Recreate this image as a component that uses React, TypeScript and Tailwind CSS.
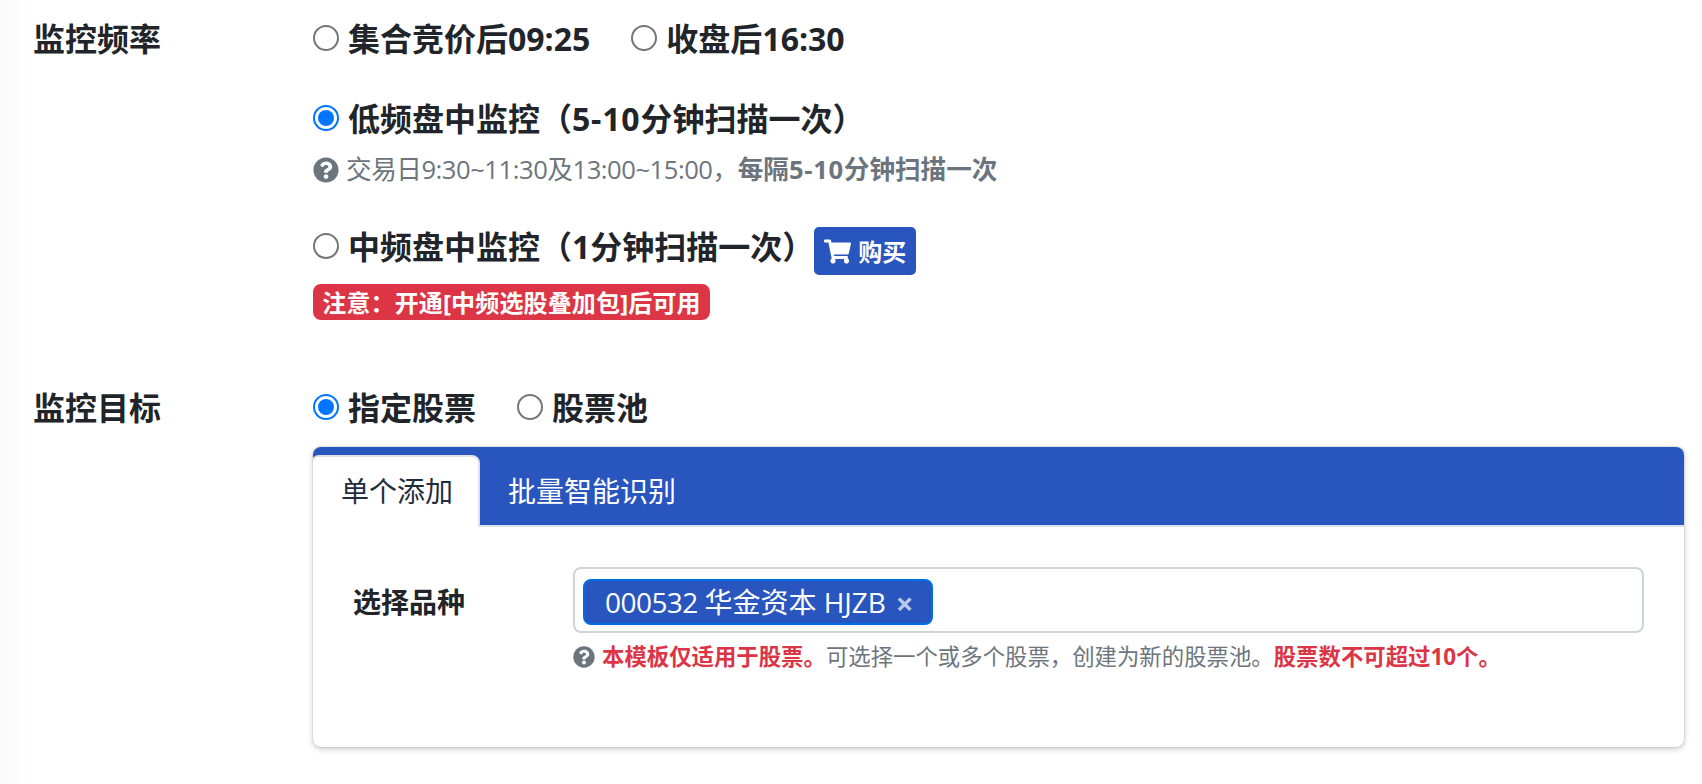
import { useState } from "react"
import type { ReactNode } from "react"
import clsx from "clsx"
import { FaQuestionCircle, FaShoppingCart } from "react-icons/fa"

interface RadioProps {
  label: ReactNode
  checked: boolean
  onSelect: () => void
}

function Radio({ label, checked, onSelect }: RadioProps) {
  return (
    <button
      type="button"
      role="radio"
      aria-checked={checked}
      onClick={onSelect}
      className="flex h-12 items-center whitespace-nowrap font-bold"
    >
      <span
        className={clsx(
          "mr-[9px] flex size-[26px] shrink-0 items-center justify-center rounded-full border-2 bg-white",
          checked ? "border-[#0075ff]" : "border-[#767676]"
        )}
      >
        {checked && <span className="size-4 rounded-full bg-[#0075ff]" />}
      </span>
      <span className="relative top-px">{label}</span>
    </button>
  )
}

function FieldRow({ label, children }: { label: string; children: ReactNode }) {
  return (
    <div className="flex">
      <div className="relative top-px w-[280px] shrink-0 font-bold leading-[48px]">{label}</div>
      <div className="min-w-0 flex-1">{children}</div>
    </div>
  )
}

const TABS = ["单个添加", "批量智能识别"]

export default function App() {
  const [frequency, setFrequency] = useState("low")
  const [target, setTarget] = useState("stock")
  const [tab, setTab] = useState(0)

  return (
    <div className="h-[784px] w-[1702px] overflow-hidden bg-linear-to-r from-[#f9f9f9] via-[#fdfdfd] via-[14px] to-white to-[32px] pl-[33px] pr-[18px] pt-[14px] font-['Open_Sans','Noto_Sans_CJK_SC',sans-serif] text-[32px] leading-[48px] text-[#212529]">
      <FieldRow label="监控频率">
        <div className="flex gap-[41px]">
          <Radio label="集合竞价后09:25" checked={frequency === "open"} onSelect={() => setFrequency("open")} />
          <Radio label="收盘后16:30" checked={frequency === "close"} onSelect={() => setFrequency("close")} />
        </div>

        <div className="mt-8">
          <Radio
            label={<>低频盘中监控（<span className="tracking-[0.8px]">5-10</span>分钟扫描一次）</>}
            checked={frequency === "low"}
            onSelect={() => setFrequency("low")}
          />
          <div className="mt-2 flex h-10 items-center whitespace-nowrap text-[25.6px] text-[#6c757d]">
            <FaQuestionCircle className="mb-px mr-[7px] size-[26px] shrink-0" />
            <span className="tracking-[-0.46px]">交易日9:30~11:30及13:00~15:00，</span>
            <b>每隔<span className="tracking-[0.7px]">5-10</span>分钟扫描一次</b>
          </div>
        </div>

        <div className="mt-8">
          <div className="flex items-start">
            <Radio label="中频盘中监控（1分钟扫描一次）" checked={frequency === "mid"} onSelect={() => setFrequency("mid")} />
            <button className="mt-[5px] flex h-12 w-[102px] items-center justify-center gap-[7px] rounded-[5px] bg-[#2855be] text-[24px] font-bold text-white">
              <FaShoppingCart className="size-[27px]" />
              <span className="relative top-px">购买</span>
            </button>
          </div>
          <span className="mt-[9px] flex h-9 w-[397px] items-center justify-center whitespace-nowrap rounded-lg bg-[#dc3545] pt-0.5 text-[24px] font-bold tracking-[0.15px] text-white">
            注意：开通[中频选股叠加包]后可用
          </span>
        </div>
      </FieldRow>

      <div className="mt-[63px]">
        <FieldRow label="监控目标">
          <div className="flex gap-[41px]">
            <Radio label="指定股票" checked={target === "stock"} onSelect={() => setTarget("stock")} />
            <Radio label="股票池" checked={target === "pool"} onSelect={() => setTarget("pool")} />
          </div>

          <div className="mt-4 h-[300px] overflow-hidden rounded-lg bg-white text-[28px] shadow-[0_0_2px_rgba(0,0,0,0.25),0_2px_6px_rgba(0,0,0,0.2)]">
            <div className="flex h-20 border-b-2 border-[#dee2e6] bg-[#2855be] pt-2">
              {TABS.map((name, i) => (
                <button
                  key={name}
                  onClick={() => setTab(i)}
                  className={clsx(
                    "h-[72px] rounded-t-lg border-2 border-b-0 pb-0.5 leading-[66px] first:-ml-0.5 first:pl-7 pl-[26px] pr-[25px]",
                    tab === i ? "border-[#dee2e6] bg-white text-[#1f2d3d]" : "border-transparent text-white"
                  )}
                >
                  {name}
                </button>
              ))}
            </div>

            <div className="flex pl-10 pr-10 pt-10">
              <div className="w-[220px] shrink-0 font-bold leading-[71px]">选择品种</div>
              <div className="flex-1">
                <div className="flex h-[66px] items-center rounded-lg border-2 border-[#ced4da] px-2 pt-1">
                  <div className="flex h-[46px] w-[350px] items-center whitespace-nowrap rounded-lg border-2 border-[#006fe6] bg-[#2855be] pl-5 text-white">
                    <span>
                      <span className="tracking-[-0.55px]">000532 </span>华金资本 <span className="tracking-[-0.1px]">HJZB</span>
                    </span>
                    <span className="ml-[10px] pt-0.5 text-[31px] font-bold text-white/70">×</span>
                  </div>
                </div>
                <div className="mt-1 flex h-10 items-center whitespace-nowrap text-[22.4px] text-[#6c757d]">
                  <FaQuestionCircle className="mr-[7px] size-[22px] shrink-0" />
                  <b className="text-[#dc3545]">本模板仅适用于股票。</b>
                  <span>可选择一个或多个股票，创建为新的股票池。</span>
                  <b className="text-[#dc3545]">股票数不可超过10个。</b>
                </div>
              </div>
            </div>
          </div>
        </FieldRow>
      </div>
    </div>
  )
}
